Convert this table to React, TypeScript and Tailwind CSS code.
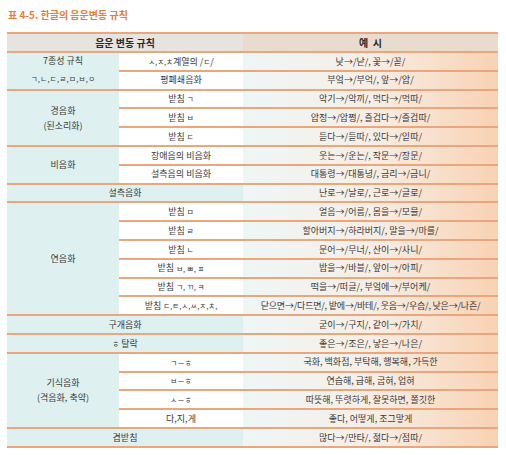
import * as React from 'react';

const line = 'border-b-2 border-[#eca67b]';
const exBg = 'bg-gradient-to-r from-[#eef6f6] via-[#f7eee6] to-[#f8d2b3]';
const catBg = 'bg-[#dff0f0]';

function J({ children }: { children: React.ReactNode }) {
  return <span className="text-[7.5px]">{children}</span>;
}

function Rule({ children }: { children: React.ReactNode }) {
  return (
    <div className={`${line} bg-white flex items-center justify-center`}>{children}</div>
  );
}

function Ex({ children }: { children: React.ReactNode }) {
  return (
    <div className={`${line} ${exBg} flex items-center justify-center whitespace-nowrap`}>
      {children}
    </div>
  );
}

function Cat({ span, children }: { span: string; children: React.ReactNode }) {
  return (
    <div className={`${line} ${catBg} ${span} flex flex-col items-center justify-center leading-[15px]`}>
      {children}
    </div>
  );
}

function Wide({ children }: { children: React.ReactNode }) {
  return (
    <div className={`${line} ${catBg} col-span-2 flex items-center justify-center`}>{children}</div>
  );
}

export default function App() {
  return (
    <div
      className="w-[506px] h-[455px] bg-white text-[#3a3a3a] overflow-hidden"
      style={{ fontFamily: '"Noto Sans CJK KR", "Noto Sans", sans-serif' }}
    >
      <div className="pl-[8px] pt-[8px] h-[32px] text-[10px] font-bold text-[#ea7d33] leading-[14px]">
        표 4-5. 한글의 음운변동 규칙
      </div>

      <div className="ml-[7px] w-[491px] text-[9px]">
        <div className="grid grid-cols-[236px_255px] h-[21px] border-y-2 border-[#eca67b] text-[10px] font-bold text-[#2a2a2a]">
          <div className="bg-[#e7e4e0] flex items-center justify-center">음운 변동 규칙</div>
          <div className="bg-[#e9dccf] flex items-center justify-center">예&nbsp;&nbsp;시</div>
        </div>

        <div className="grid grid-cols-[112px_124px_255px] auto-rows-[18.8px]">
          <Cat span="row-span-2">
            <span className="mt-[-2px]">7종성 규칙</span>
            <span className="text-[7.5px] tracking-[0.3px] mt-[3px]">ㄱ,ㄴ,ㄷ,ㄹ,ㅁ,ㅂ,ㅇ</span>
          </Cat>
          <Rule>
            <J>ㅅ,ㅈ,ㅊ</J>계열의 /<J>ㄷ</J>/
          </Rule>
          <Ex>낮→/낟/, 꽃→/꼳/</Ex>
          <Rule>평폐쇄음화</Rule>
          <Ex>부엌→/부억/, 앞→/압/</Ex>

          <Cat span="row-span-3">
            <span>경음화</span>
            <span>(된소리화)</span>
          </Cat>
          <Rule>
            받침&nbsp;<J>ㄱ</J>
          </Rule>
          <Ex>악기→/악끼/, 먹다→/먹따/</Ex>
          <Rule>
            받침&nbsp;<J>ㅂ</J>
          </Rule>
          <Ex>압정→/압쩡/, 즐겁다→/즐겁따/</Ex>
          <Rule>
            받침&nbsp;<J>ㄷ</J>
          </Rule>
          <Ex>듣다→/듣따/, 있다→/읻따/</Ex>

          <Cat span="row-span-2">
            <span>비음화</span>
          </Cat>
          <Rule>장애음의 비음화</Rule>
          <Ex>웃는→/운는/, 작문→/장문/</Ex>
          <Rule>설측음의 비음화</Rule>
          <Ex>대통령→/대통녕/, 금리→/금니/</Ex>

          <Wide>설측음화</Wide>
          <Ex>난로→/날로/, 근로→/글로/</Ex>

          <Cat span="row-span-6">
            <span>연음화</span>
          </Cat>
          <Rule>
            받침&nbsp;<J>ㅁ</J>
          </Rule>
          <Ex>얼음→/어름/, 몸을→/모믈/</Ex>
          <Rule>
            받침&nbsp;<J>ㄹ</J>
          </Rule>
          <Ex>할아버지→/하라버지/, 말을→/마를/</Ex>
          <Rule>
            받침&nbsp;<J>ㄴ</J>
          </Rule>
          <Ex>문어→/무너/, 산이→/사니/</Ex>
          <Rule>
            받침&nbsp;<J>ㅂ, ㅃ, ㅍ</J>
          </Rule>
          <Ex>밥을→/바블/, 앞이→/아피/</Ex>
          <Rule>
            받침&nbsp;<J>ㄱ, ㄲ, ㅋ</J>
          </Rule>
          <Ex>떡을→/떠글/, 부엌에→/부어케/</Ex>
          <Rule>
            받침&nbsp;<J>ㄷ,ㅌ,ㅅ,ㅆ,ㅈ,ㅊ,</J>
          </Rule>
          <Ex>
            <span className="tracking-[-0.2px]">닫으면→/다드면/, 밭에→/바테/, 웃음→/우슴/, 낮은→/나즌/</span>
          </Ex>

          <Wide>구개음화</Wide>
          <Ex>굳이→/구지/, 같이→/가치/</Ex>

          <Wide>
            <J>ㅎ</J>&nbsp;탈락
          </Wide>
          <Ex>좋은→/조은/, 낳은→/나은/</Ex>

          <Cat span="row-span-4">
            <span>기식음화</span>
            <span>(격음화, 축약)</span>
          </Cat>
          <Rule>
            <J>ㄱ－ㅎ</J>
          </Rule>
          <Ex>국화, 백화점, 부탁해, 행복해, 가득한</Ex>
          <Rule>
            <J>ㅂ－ㅎ</J>
          </Rule>
          <Ex>연습해, 급해, 굽혀, 업혀</Ex>
          <Rule>
            <J>ㅅ－ㅎ</J>
          </Rule>
          <Ex>따뜻해, 뚜렷하게, 잘못하면, 쫄깃한</Ex>
          <Rule>다,지,게</Rule>
          <Ex>좋다, 어떻게, 조그맣게</Ex>

          <Wide>겹받침</Wide>
          <Ex>많다→/만타/, 젊다→/점따/</Ex>
        </div>
      </div>
    </div>
  );
}
